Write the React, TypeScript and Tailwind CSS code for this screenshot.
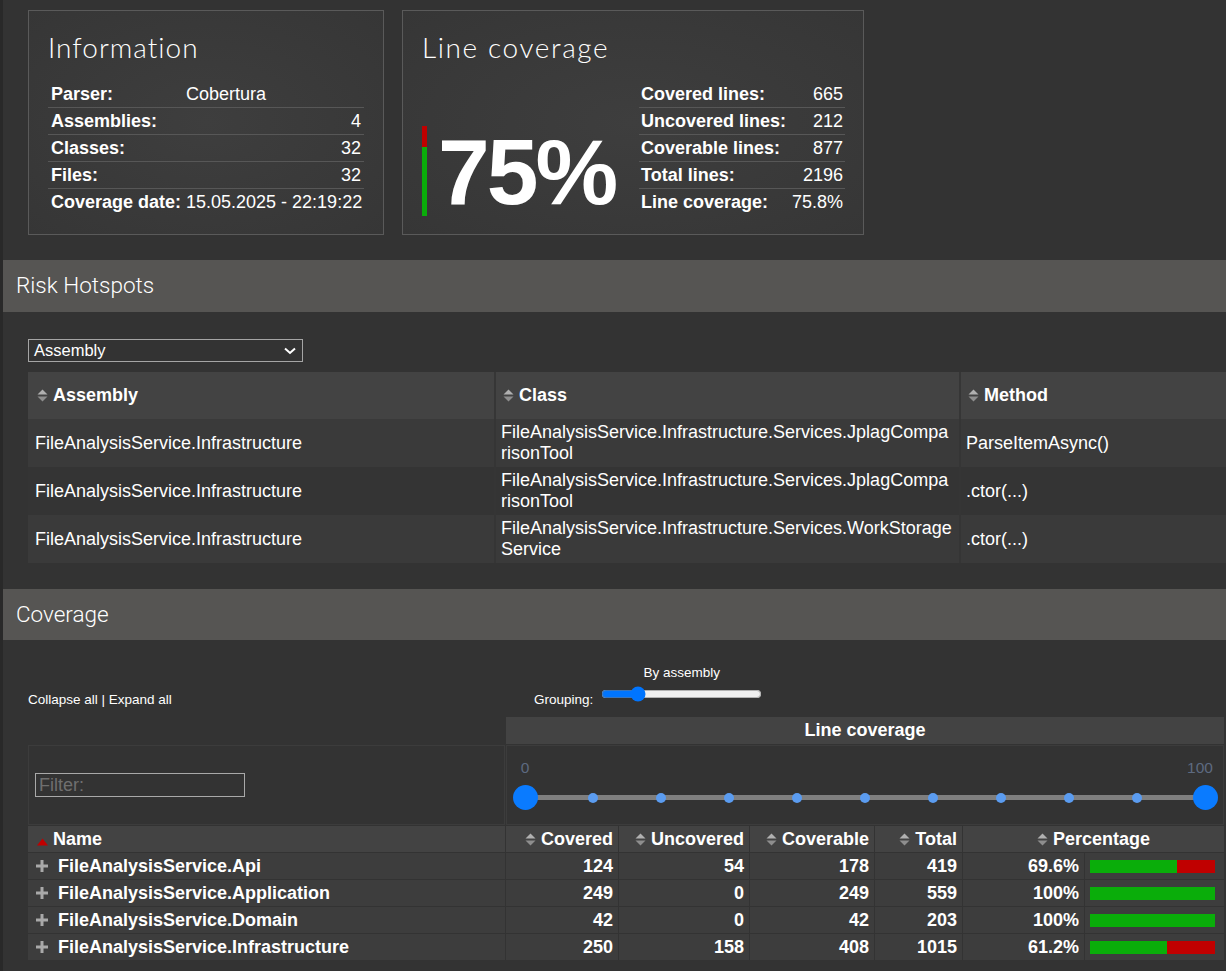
import React from "react";

const SortIcon = () => (
  <svg width="11" height="13" viewBox="0 0 11 13" className="shrink-0">
    <path d="M0.5 5.5 L5.5 0.5 L10.5 5.5 Z" fill="#b0b0b0" />
    <path d="M0.5 7.5 L10.5 7.5 L5.5 12.5 Z" fill="#8e8e8e" />
  </svg>
);

const SortAsc = () => (
  <svg width="11" height="8" viewBox="0 0 11 8" className="shrink-0 mt-[5px]">
    <path d="M0 7.5 L5.5 0.5 L11 7.5 Z" fill="#c00000" />
  </svg>
);

const Plus = () => (
  <svg width="12" height="12" viewBox="0 0 12 12" className="shrink-0">
    <rect x="0" y="4.5" width="12" height="3" fill="#a9a9a9" />
    <rect x="4.5" y="0" width="3" height="12" fill="#a9a9a9" />
  </svg>
);

const infoRows: { label: string; value: string; left?: boolean }[] = [
  { label: "Parser:", value: "Cobertura", left: true },
  { label: "Assemblies:", value: "4" },
  { label: "Classes:", value: "32" },
  { label: "Files:", value: "32" },
  { label: "Coverage date:", value: "15.05.2025 - 22:19:22" },
];

const lineRows = [
  { label: "Covered lines:", value: "665" },
  { label: "Uncovered lines:", value: "212" },
  { label: "Coverable lines:", value: "877" },
  { label: "Total lines:", value: "2196" },
  { label: "Line coverage:", value: "75.8%" },
];

const riskRows = [
  {
    assembly: "FileAnalysisService.Infrastructure",
    cls: ["FileAnalysisService.Infrastructure.Services.JplagCompa", "risonTool"],
    method: "ParseItemAsync()",
  },
  {
    assembly: "FileAnalysisService.Infrastructure",
    cls: ["FileAnalysisService.Infrastructure.Services.JplagCompa", "risonTool"],
    method: ".ctor(...)",
  },
  {
    assembly: "FileAnalysisService.Infrastructure",
    cls: ["FileAnalysisService.Infrastructure.Services.WorkStorage", "Service"],
    method: ".ctor(...)",
  },
];

const covRows = [
  { name: "FileAnalysisService.Api", covered: 124, uncovered: 54, coverable: 178, total: 419, pct: "69.6%", ratio: 69.6 },
  { name: "FileAnalysisService.Application", covered: 249, uncovered: 0, coverable: 249, total: 559, pct: "100%", ratio: 100 },
  { name: "FileAnalysisService.Domain", covered: 42, uncovered: 0, coverable: 42, total: 203, pct: "100%", ratio: 100 },
  { name: "FileAnalysisService.Infrastructure", covered: 250, uncovered: 158, coverable: 408, total: 1015, pct: "61.2%", ratio: 61.2 },
];

export default function App() {
  return (
    <div className="flex h-[971px] w-full overflow-hidden bg-[#333333] text-white font-['Liberation_Sans',Arial,sans-serif]">
      <div className="w-[3px] shrink-0 bg-[#292929]" />
      <div className="min-w-0 flex-1">
        {/* Cards */}
        <div className="flex gap-[18px] pl-[25px] pt-[10px]">
          <div className="h-[225px] w-[356px] border border-[#5a5a5a] bg-[radial-gradient(ellipse_at_center,#3e3e3e_0%,#363636_100%)] px-[19px] pt-[19px]">
            <div className="font-['Lato',sans-serif] text-[28px] font-light leading-[34px] tracking-[1px]">Information</div>
            <div className="mt-[17px]">
              {infoRows.map((r, i) => (
                <div
                  key={r.label}
                  className={`flex h-[27px] items-center px-[3px] text-[18px] ${i < infoRows.length - 1 ? "border-b border-[#575757]" : ""}`}
                >
                  <div className="w-[135px] shrink-0 font-bold">{r.label}</div>
                  <div className={`flex-1 whitespace-nowrap ${r.left ? "text-left" : "text-right"}`}>{r.value}</div>
                </div>
              ))}
            </div>
          </div>

          <div className="h-[225px] w-[462px] border border-[#5a5a5a] bg-[radial-gradient(ellipse_at_center,#3e3e3e_0%,#363636_100%)] pl-[19px] pr-[17px] pt-[19px]">
            <div className="font-['Lato',sans-serif] text-[28px] font-light leading-[34px] tracking-[1.6px]">Line coverage</div>
            <div className="mt-[17px] flex items-end">
              <div className="flex w-[217px] items-end">
                <div className="flex h-[90px] w-[5px] flex-col">
                  <div className="h-[21px] bg-[#c00000]" />
                  <div className="flex-1 bg-[#0aad0a]" />
                </div>
                <div className="mb-[-3px] ml-[11px] text-[93px] font-bold leading-none tracking-[-3px]">75%</div>
              </div>
              <div className="w-[206px]">
                {lineRows.map((r, i) => (
                  <div
                    key={r.label}
                    className={`flex h-[27px] items-center px-[2px] text-[18px] ${i < lineRows.length - 1 ? "border-b border-[#575757]" : ""}`}
                  >
                    <div className="flex-1 whitespace-nowrap font-bold">{r.label}</div>
                    <div className="whitespace-nowrap text-right">{r.value}</div>
                  </div>
                ))}
              </div>
            </div>
          </div>
        </div>

        {/* Risk Hotspots */}
        <div className="mt-[25px] flex h-[52px] items-center bg-[#565553] pl-[13px] font-['Roboto',sans-serif] text-[22.5px] font-light">
          Risk Hotspots
        </div>

        <div className="pl-[25px]">
          <div className="mt-[27px] flex h-[23px] w-[275px] items-center justify-between border border-[#a5a5a5] bg-[#333333] pl-[5px] pr-[6px] text-[16.5px]">
            <span>Assembly</span>
            <svg width="12" height="8" viewBox="0 0 12 8">
              <path d="M1 1.5 L6 6 L11 1.5" stroke="#ffffff" strokeWidth="2" fill="none" />
            </svg>
          </div>

          <div className="mt-[10px] text-[18px]">
            <div className="grid h-[47px] grid-cols-[466px_465px_1fr] bg-[#434343] font-bold">
              <div className="flex items-center gap-[5px] pl-[9px]">
                <SortIcon />
                <span>Assembly</span>
              </div>
              <div className="flex items-center gap-[5px] border-l-2 border-[#363636] pl-[7px]">
                <SortIcon />
                <span>Class</span>
              </div>
              <div className="flex items-center gap-[5px] border-l-2 border-[#363636] pl-[7px]">
                <SortIcon />
                <span>Method</span>
              </div>
            </div>
            {riskRows.map((r, i) => (
              <div
                key={i}
                className={`grid h-[48px] grid-cols-[466px_465px_1fr] leading-[21px] ${i % 2 === 0 ? "bg-[#3a3a3a]" : "bg-[#343434]"}`}
              >
                <div className="flex items-center whitespace-nowrap pl-[7px]">{r.assembly}</div>
                <div className="flex flex-col justify-center whitespace-nowrap border-l-2 border-[#353535] pl-[5px]">
                  <span>{r.cls[0]}</span>
                  <span>{r.cls[1]}</span>
                </div>
                <div className="flex items-center whitespace-nowrap border-l-2 border-[#353535] pl-[5px]">{r.method}</div>
              </div>
            ))}
          </div>
        </div>

        {/* Coverage */}
        <div className="mt-[26px] flex h-[51px] items-center bg-[#565553] pl-[13px] font-['Roboto',sans-serif] text-[22.5px] font-light">
          Coverage
        </div>

        <div className="pl-[25px]">
          <div className="mt-[25px] flex items-end text-[13.5px] leading-[16px]">
            <div className="w-[506px] shrink-0 pb-[1px]">
              <span>Collapse all</span> | <span>Expand all</span>
            </div>
            <div className="flex items-end gap-[8px]">
              <span className="pb-[1px]">Grouping:</span>
              <div className="flex flex-col items-center pb-[7px]">
                <span>By assembly</span>
                <input
                  type="range"
                  min={0}
                  max={5}
                  defaultValue={1}
                  className="mt-[5px] h-[16px] w-[161px] accent-[#0075ff]"
                />
              </div>
            </div>
          </div>

          <div className="mt-[8px] grid grid-cols-[477px_112px_130px_124px_87px_121px_139px] gap-[1px] text-[18px]">
            {/* row 1 */}
            <div className="h-[27px]" />
            <div className="col-span-6 flex h-[27px] items-center justify-center bg-[#434343] font-bold">Line coverage</div>

            {/* row 2 */}
            <div className="flex h-[80px] items-center border border-[#3c3c3c] bg-[#333333] pl-[6px]">
              <input
                type="text"
                placeholder="Filter:"
                className="h-[24px] w-[210px] border border-[#a9a9a9] bg-transparent px-[3px] text-[18px] text-white outline-none placeholder:text-[#6f6f6f]"
              />
            </div>
            <div className="col-span-6 h-[80px] border border-[#3c3c3c] bg-[#333333] px-[18px]">
              <div className="mt-[13px] flex h-[18px] items-center justify-between text-[15.5px] text-[#5d6a80]">
                <div className="flex w-0 justify-center">
                  <span>0</span>
                </div>
                <div className="mr-[5px] flex w-0 justify-center">
                  <span>100</span>
                </div>
              </div>
              <div className="mt-[8px] flex h-[25px] items-center justify-between bg-[linear-gradient(#7f7f7f,#7f7f7f)] bg-[length:100%_5px] bg-center bg-no-repeat">
                {Array.from({ length: 11 }).map((_, i) => (
                  <div key={i} className="flex w-0 justify-center">
                    {i === 0 || i === 10 ? (
                      <div className="h-[25px] w-[25px] shrink-0 rounded-full bg-[#0a7bff]" />
                    ) : (
                      <div className="h-[10px] w-[10px] shrink-0 rounded-full bg-[#5b9cf0]" />
                    )}
                  </div>
                ))}
              </div>
            </div>

            {/* header row */}
            <div className="flex h-[26px] items-center gap-[5px] bg-[#434343] pl-[9px] font-bold">
              <SortAsc />
              <span>Name</span>
            </div>
            {["Covered", "Uncovered", "Coverable", "Total"].map((h) => (
              <div key={h} className="flex h-[26px] items-center justify-end gap-[5px] bg-[#434343] pr-[5px] font-bold">
                <SortIcon />
                <span>{h}</span>
              </div>
            ))}
            <div className="col-span-2 flex h-[26px] items-center justify-center gap-[5px] bg-[#434343] font-bold">
              <SortIcon />
              <span>Percentage</span>
            </div>

            {/* data rows */}
            {covRows.map((r) => (
              <React.Fragment key={r.name}>
                <div className="flex h-[26px] items-center gap-[10px] bg-[#3d3d3d] pl-[8px] font-bold">
                  <Plus />
                  <span className="whitespace-nowrap">{r.name}</span>
                </div>
                <div className="flex h-[26px] items-center justify-end bg-[#3d3d3d] pr-[5px] font-bold">{r.covered}</div>
                <div className="flex h-[26px] items-center justify-end bg-[#3d3d3d] pr-[5px] font-bold">{r.uncovered}</div>
                <div className="flex h-[26px] items-center justify-end bg-[#3d3d3d] pr-[5px] font-bold">{r.coverable}</div>
                <div className="flex h-[26px] items-center justify-end bg-[#3d3d3d] pr-[5px] font-bold">{r.total}</div>
                <div className="flex h-[26px] items-center justify-end bg-[#3d3d3d] pr-[5px] font-bold">{r.pct}</div>
                <div className="flex h-[26px] items-center bg-[#3d3d3d] pl-[5px]">
                  <div className="flex h-[13px] w-[125px] bg-[#c00000]">
                    <div className="h-full bg-[#0aad0a]" style={{ width: `${r.ratio}%` }} />
                  </div>
                </div>
              </React.Fragment>
            ))}
          </div>
        </div>
      </div>
    </div>
  );
}
